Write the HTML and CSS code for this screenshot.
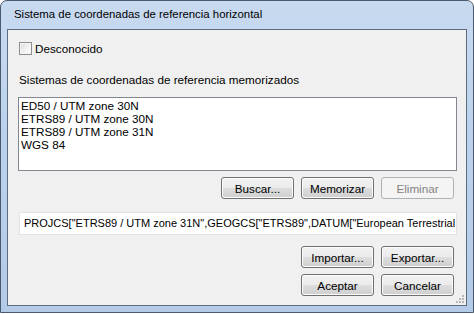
FILE: index.html
```html
<!DOCTYPE html>
<html lang="es">
<head>
    <meta charset="UTF-8">
    <meta name="viewport" content="width=device-width, initial-scale=1.0">
    <title>Sistema de coordenadas de referencia horizontal</title>
    <link rel="stylesheet" href="styles.css">
</head>
<body>
    <div class="window">
        <div class="titlebar">Sistema de coordenadas de referencia horizontal</div>
        <div class="client">
            <label class="check">
                <span class="box"></span>
                <span>Desconocido</span>
            </label>

            <div class="group-label">Sistemas de coordenadas de referencia memorizados</div>
            <ul class="list">
                <li>ED50 / UTM zone 30N</li>
                <li>ETRS89 / UTM zone 30N</li>
                <li>ETRS89 / UTM zone 31N</li>
                <li>WGS 84</li>
            </ul>

            <div class="buttons">
                <button class="btn">Buscar...</button>
                <button class="btn">Memorizar</button>
                <button class="btn" disabled>Eliminar</button>
            </div>

            <div class="field">PROJCS["ETRS89 / UTM zone 31N",GEOGCS["ETRS89",DATUM["European Terrestrial Reference System 1989"]]]</div>

            <div class="buttons first">
                <button class="btn">Importar...</button>
                <button class="btn">Exportar...</button>
            </div>
            <div class="buttons second">
                <button class="btn">Aceptar</button>
                <button class="btn">Cancelar</button>
            </div>

            <div class="grip">
                <i></i><i></i><i></i><i></i><i></i><i></i>
            </div>
        </div>
    </div>
</body>
</html>
```

FILE: styles.css
```css
*{
    margin:0;
    padding:0;
    box-sizing:border-box;
}
body {
    width:474px;
    height:314px;
    background:#ffffff;
    font-family:"Liberation Sans",Arial,sans-serif;
    font-size:11.7px;
    color:#000;
}
.window {
    width:474px;
    height:313px;
    border:1px solid #4a5a6e;
    border-radius:7px 7px 0 0;
    background:linear-gradient(to bottom,#c8daf0 0%,#bcd2ec 40%,#b4cbe7 100%);
    padding:0 6px 6px 6px;
    display:flex;
    flex-direction:column;
}
.titlebar {
    height:28px;
    padding-left:7px;
    line-height:27px;
    font-size:11.4px;
    color:#000;
}
.client {
    position:relative;
    flex:1;
    border:1px solid #5d6d80;
    background:#f0f0f0;
    padding:12px 9px 0 10px;
    display:flex;
    flex-direction:column;
}
.check {
    display:flex;
    align-items:center;
    gap:3px;
    margin-left:1px;
    height:13px;
}
.box {
    width:13px;
    height:13px;
    border:1px solid #8e8f8f;
    background:linear-gradient(135deg,#dcdcdc 0%,#f4f4f4 60%,#ffffff 100%);
    box-shadow:inset 0 0 0 1px #f4f4f4;
}
.group-label {
    margin-top:18px;
    margin-left:1px;
    height:14px;
    line-height:14px;
}
.list {
    list-style:none;
    margin-top:10px;
    height:74px;
    border:1px solid #828790;
    background:#fff;
    padding:1px 2px;
}
.list li {
    height:13px;
    line-height:13px;
}
.buttons {
    display:flex;
    justify-content:flex-end;
    gap:7px;
    margin-top:6px;
    margin-right:3px;
}
.buttons.first {
    margin-top:11px;
}
.buttons.second {
    margin-top:6px;
}
.btn {
    width:73px;
    height:22px;
    border:1px solid #707070;
    border-radius:3px;
    background:linear-gradient(to bottom,#f2f2f2 0%,#ebebeb 50%,#dddddd 51%,#cfcfcf 100%);
    box-shadow:inset 0 0 0 1px #fcfcfc;
    font-family:"Liberation Sans",Arial,sans-serif;
    font-size:11.7px;
    color:#000;
}
.btn:disabled {
    border-color:#adb2b5;
    background:#f4f4f4;
    box-shadow:none;
    color:#838383;
}
.field {
    margin-top:13px;
    margin-left:1px;
    height:23px;
    border:1px solid #e3e3e3;
    background:#fff;
    padding:0 4px;
    font-size:11px;
    line-height:21px;
    white-space:nowrap;
    overflow:hidden;
}
.grip {
    position:absolute;
    right:2px;
    bottom:2px;
    width:8px;
    height:8px;
}
.grip i {
    position:absolute;
    width:2px;
    height:2px;
    background:#b8b8b8;
}
.grip i:nth-child(1) { right:0; bottom:0; }
.grip i:nth-child(2) { right:3px; bottom:0; }
.grip i:nth-child(3) { right:6px; bottom:0; }
.grip i:nth-child(4) { right:0; bottom:3px; }
.grip i:nth-child(5) { right:3px; bottom:3px; }
.grip i:nth-child(6) { right:0; bottom:6px; }
```
